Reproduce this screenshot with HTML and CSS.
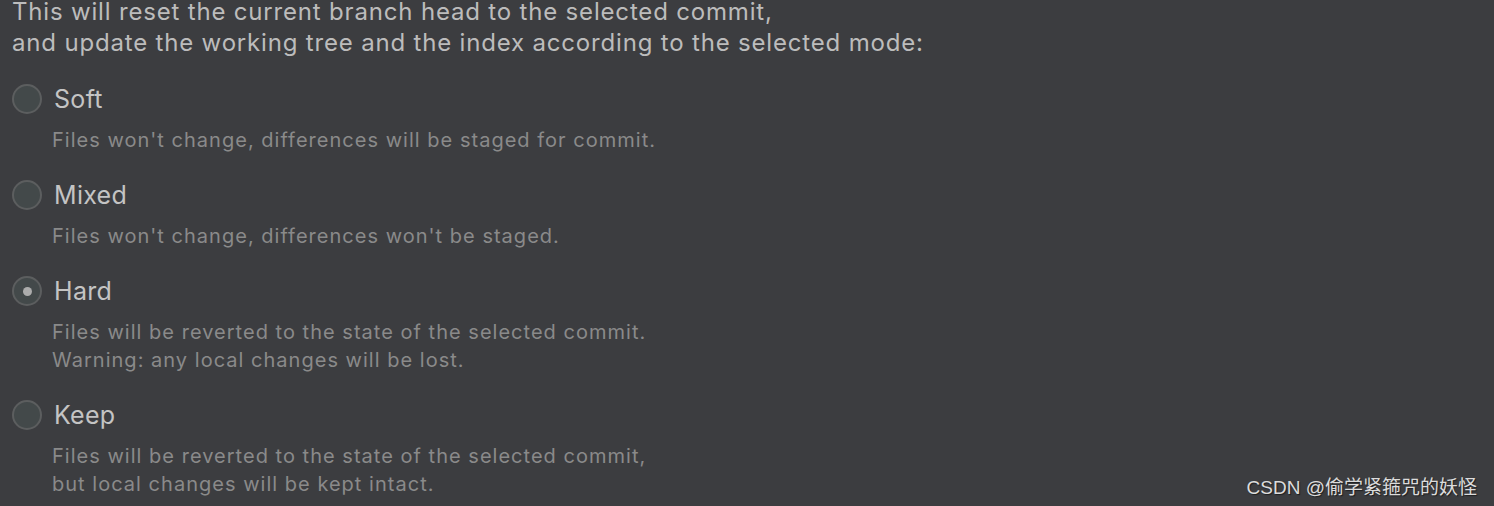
FILE: index.html
```html
<!DOCTYPE html>
<html>
<head>
<meta charset="utf-8">
<link rel="stylesheet" href="styles.css">
</head>
<body>
<div class="dialog">
  <p class="intro">This will reset the current branch head to the selected commit,<br>and update the working tree and the index according to the selected mode:</p>
  <div class="options">
    <div class="option">
      <div class="row"><span class="radio"></span><span class="label">Soft</span></div>
      <div class="desc">Files won't change, differences will be staged for commit.</div>
    </div>
    <div class="option">
      <div class="row"><span class="radio"></span><span class="label">Mixed</span></div>
      <div class="desc">Files won't change, differences won't be staged.</div>
    </div>
    <div class="option">
      <div class="row"><span class="radio checked"></span><span class="label">Hard</span></div>
      <div class="desc">Files will be reverted to the state of the selected commit.<br>Warning: any local changes will be lost.</div>
    </div>
    <div class="option">
      <div class="row"><span class="radio"></span><span class="label">Keep</span></div>
      <div class="desc">Files will be reverted to the state of the selected commit,<br>but local changes will be kept intact.</div>
    </div>
  </div>
</div>
<div class="watermark">CSDN @偷学紧箍咒的妖怪</div>
</body>
</html>
```
FILE: styles.css
```css
html, body {
  margin: 0;
  padding: 0;
  background: #3c3d40;
  height: 100%;
  overflow: hidden;
}
body {
  font-family: Inter, "Liberation Sans", "Noto Sans CJK SC", sans-serif;
  color: #bcbcbc;
  position: relative;
}
.dialog {
  padding-left: 12px;
}
.intro {
  margin: -4px 0 0 0;
  font-size: 24px;
  line-height: 31px;
  letter-spacing: 0.82px;
}
.options {
  display: flex;
  flex-direction: column;
  margin-top: 25px;
}
.option {
  display: flex;
  flex-direction: column;
  margin-bottom: 25px;
}
.row {
  display: flex;
  align-items: center;
  height: 32px;
  gap: 12px;
}
.radio {
  width: 26px;
  height: 26px;
  border-radius: 50%;
  border: 2px solid #5c5e5f;
  background: #43494a;
  display: flex;
  align-items: center;
  justify-content: center;
  flex: none;
}
.radio.checked::after {
  content: "";
  width: 9px;
  height: 9px;
  border-radius: 50%;
  background: #acacac;
}
.label {
  font-size: 25px;
  letter-spacing: 0.3px;
  color: #c4c4c4;
}
.desc {
  margin-top: 11px;
  padding-left: 40px;
  font-size: 20px;
  line-height: 28px;
  letter-spacing: 1.02px;
  color: #8a8a8a;
}
.watermark {
  position: absolute;
  right: 17px;
  bottom: 7px;
  font-family: "Liberation Sans", "Noto Sans CJK SC", sans-serif;
  font-size: 19px;
  color: #dcdcdc;
  text-shadow: 1px 1px 1px rgba(0,0,0,0.5);
}
```
